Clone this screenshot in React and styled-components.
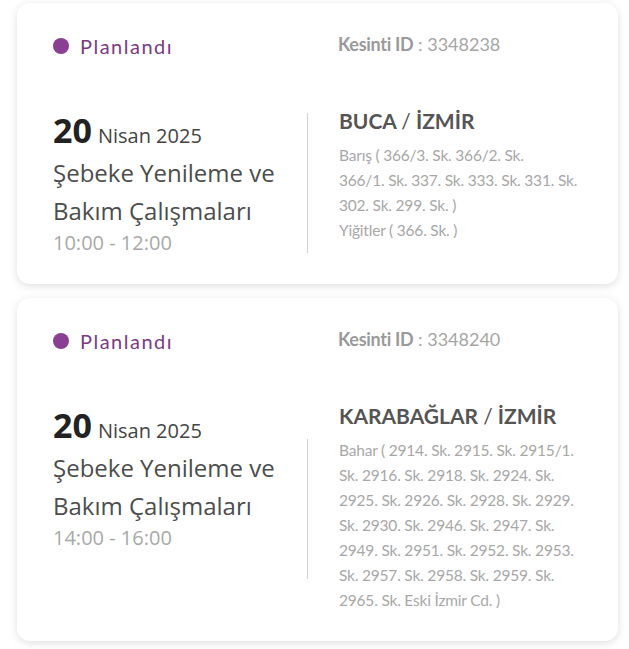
import React from "react";
import styled, { createGlobalStyle } from "styled-components";

const GlobalStyle = createGlobalStyle`
  body {
    margin: 0;
    background: #ffffff;
    font-family: "Open Sans", sans-serif;
  }
`;

const Page = styled.div`
  display: flex;
  flex-direction: column;
  gap: 14px;
  padding: 3px 0 10px 17px;
`;

const Card = styled.div`
  width: 601px;
  box-sizing: border-box;
  background: #fff;
  border-radius: 13px;
  box-shadow: 0 2px 9px rgba(0, 0, 0, 0.13);
  padding: 30px 28px 28px 36px;
`;

const TopRow = styled.div`
  display: flex;
  align-items: center;
  height: 26px;
`;

const Status = styled.div`
  display: flex;
  align-items: center;
  gap: 11px;
  width: 285px;
  font-family: Lato, sans-serif;
  font-size: 20px;
  letter-spacing: 1.5px;
  color: #7b3a86;
`;

const Dot = styled.span`
  width: 16px;
  height: 16px;
  border-radius: 50%;
  background: #8a3f92;
`;

const OutageId = styled.div`
  font-family: Lato, sans-serif;
  font-size: 18px;
  color: #a6a6a6;
  margin-top: -4px;

  b {
    font-weight: 700;
    color: #9a9a9a;
    letter-spacing: -0.3px;
  }
`;

const Body = styled.div`
  display: flex;
  margin-top: 49px;
`;

const LeftCol = styled.div`
  width: 254px;
  padding-top: 4px;
`;

const DateLine = styled.div`
  line-height: 36px;
  color: #444;
  font-size: 20px;

  strong {
    font-size: 34px;
    font-weight: 700;
    color: #222;
    margin-right: 6px;
  }
`;

const Title = styled.div`
  font-size: 24px;
  line-height: 38px;
  color: #4d4d4d;
`;

const Time = styled.div`
  font-size: 20px;
  line-height: 26px;
  color: #a9a9a9;
`;

const Divider = styled.div`
  width: 1px;
  height: 140px;
  background: #d0d0d0;
  align-self: center;
  margin-top: 1px;
  margin-right: 31px;
`;

const RightCol = styled.div`
  flex: 1;
  font-family: Lato, sans-serif;
`;

const Region = styled.div`
  font-size: 21px;
  line-height: 26px;
  font-weight: 700;
  color: #555;
  margin-bottom: 9px;

  span {
    font-weight: 400;
  }
`;

const Streets = styled.div`
  font-size: 15.5px;
  line-height: 25px;
  letter-spacing: -0.2px;
  color: #a8a8a8;
  white-space: pre-line;
`;

const outages = [
  {
    id: "3348238",
    time: "10:00 - 12:00",
    district: "BUCA",
    streets: [
      "Barış ( 366/3. Sk. 366/2. Sk.\n366/1. Sk. 337. Sk. 333. Sk. 331. Sk.\n302. Sk. 299. Sk. )",
      "Yiğitler ( 366. Sk. )",
    ],
  },
  {
    id: "3348240",
    time: "14:00 - 16:00",
    district: "KARABAĞLAR",
    streets: [
      "Bahar ( 2914. Sk. 2915. Sk. 2915/1. Sk. 2916. Sk. 2918. Sk. 2924. Sk. 2925. Sk. 2926. Sk. 2928. Sk. 2929. Sk. 2930. Sk. 2946. Sk. 2947. Sk. 2949. Sk. 2951. Sk. 2952. Sk. 2953. Sk. 2957. Sk. 2958. Sk. 2959. Sk. 2965. Sk. Eski İzmir Cd. )",
    ],
  },
];

const OutageCard = ({ item }) => (
  <Card>
    <TopRow>
      <Status>
        <Dot />
        Planlandı
      </Status>
      <OutageId>
        <b>Kesinti ID</b> : {item.id}
      </OutageId>
    </TopRow>
    <Body>
      <LeftCol>
        <DateLine>
          <strong>20</strong>Nisan 2025
        </DateLine>
        <Title>Şebeke Yenileme ve Bakım Çalışmaları</Title>
        <Time>{item.time}</Time>
      </LeftCol>
      <Divider />
      <RightCol>
        <Region>
          {item.district} <span>/</span> İZMİR
        </Region>
        {item.streets.map((s) => (
          <Streets key={s}>{s}</Streets>
        ))}
      </RightCol>
    </Body>
  </Card>
);

export default function App() {
  return (
    <>
      <GlobalStyle />
      <Page>
        {outages.map((o) => (
          <OutageCard key={o.id} item={o} />
        ))}
      </Page>
    </>
  );
}
